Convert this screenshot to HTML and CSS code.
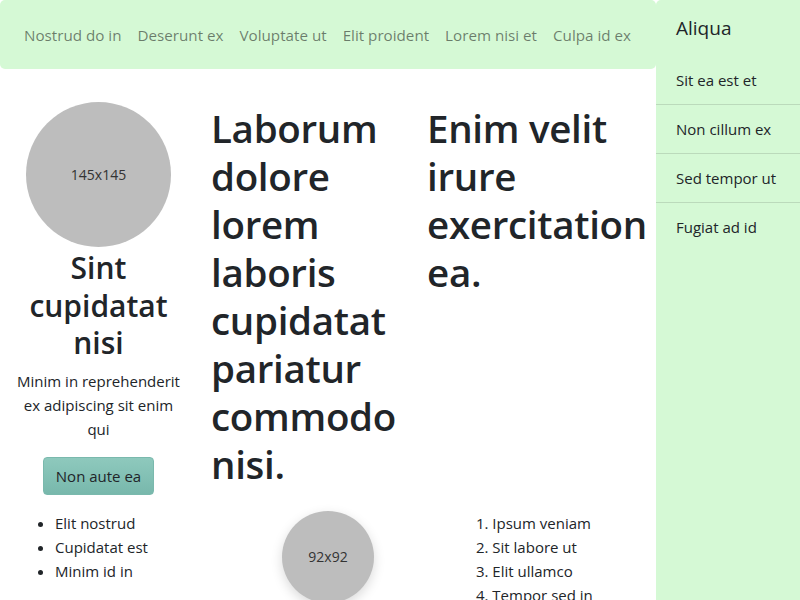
FILE: index.html
```html
<!DOCTYPE html>
<html lang="en">
<head>
<meta charset="utf-8">
<title>Page</title>
<link rel="stylesheet" href="styles.css">
</head>
<body>
<div class="layout">
  <div class="main">
    <nav class="navbar">
      <a class="nav-link" href="#">Nostrud do in</a>
      <a class="nav-link" href="#">Deserunt ex</a>
      <a class="nav-link" href="#">Voluptate ut</a>
      <a class="nav-link" href="#">Elit proident</a>
      <a class="nav-link" href="#">Lorem nisi et</a>
      <a class="nav-link" href="#">Culpa id ex</a>
    </nav>
    <div class="row-top">
      <div class="col col-profile">
        <div class="avatar avatar-lg">145x145</div>
        <h2 class="profile-title">Sint cupidatat nisi</h2>
        <p class="profile-text">Minim in reprehenderit ex adipiscing sit enim qui</p>
        <button class="btn" type="button">Non aute ea</button>
      </div>
      <div class="col col-head">
        <h1 class="big-title">Laborum dolore lorem laboris cupidatat pariatur commodo nisi.</h1>
      </div>
      <div class="col col-head">
        <h1 class="big-title">Enim velit irure exercitation ea.</h1>
      </div>
    </div>
    <div class="row-bottom">
      <div class="cell">
        <ul class="list">
          <li>Elit nostrud</li>
          <li>Cupidatat est</li>
          <li>Minim id in</li>
        </ul>
      </div>
      <div class="cell cell-center">
        <div class="avatar avatar-sm">92x92</div>
      </div>
      <div class="cell">
        <ol class="list">
          <li>Ipsum veniam</li>
          <li>Sit labore ut</li>
          <li>Elit ullamco</li>
          <li>Tempor sed in</li>
        </ol>
      </div>
    </div>
  </div>
  <aside class="sidebar">
    <div class="sidebar-header">Aliqua</div>
    <ul class="sidebar-list">
      <li class="sidebar-item">Sit ea est et</li>
      <li class="sidebar-item">Non cillum ex</li>
      <li class="sidebar-item">Sed tempor ut</li>
      <li class="sidebar-item">Fugiat ad id</li>
    </ul>
  </aside>
</div>
</body>
</html>
```
FILE: styles.css
```css
* { box-sizing: border-box; }
html, body { margin: 0; padding: 0; }
body {
  font-family: "Open Sans", "Noto Sans", sans-serif;
  font-size: 15px;
  line-height: 24px;
  color: #212529;
  background: #fff;
  overflow: hidden;
}
.layout {
  display: flex;
  height: 600px;
}
.main {
  width: 656px;
  flex: none;
}
.navbar {
  height: 69px;
  display: flex;
  align-items: center;
  padding: 0 8px 0 16px;
  background: #d5f9d5;
  border-radius: 5px;
}
.nav-link {
  padding: 0 8px;
  font-size: 15.2px;
  color: rgba(0, 0, 0, 0.5);
  text-decoration: none;
  white-space: nowrap;
}
.row-top {
  display: grid;
  grid-template-columns: 181px 200px 1fr;
  column-gap: 22px;
  padding-left: 8px;
  margin-top: 33px;
}
.col-profile {
  display: flex;
  flex-direction: column;
  align-items: center;
  text-align: center;
}
.col-head { padding-top: 2px; }
.col-head + .col-head { margin-left: -6px; }
.avatar {
  border-radius: 50%;
  background: #bdbdbd;
  color: #333;
  display: flex;
  align-items: center;
  justify-content: center;
  font-size: 14px;
}
.avatar-lg { width: 145px; height: 145px; }
.avatar-sm {
  width: 92px;
  height: 92px;
  box-shadow: 0 4px 12px rgba(0, 0, 0, 0.15);
}
.profile-title {
  margin: 2px 0 7px;
  font-size: 30px;
  line-height: 37.5px;
  font-weight: 600;
}
.profile-text {
  margin: 0 0 16px;
  max-width: 168px;
}
.btn {
  font: inherit;
  color: #212529;
  height: 38px;
  padding: 6px 12px;
  border: 1px solid #7ab9ad;
  border-radius: 4px;
  background: linear-gradient(#8ec9bd, #78b8ac);
  cursor: pointer;
}
.big-title {
  margin: 0;
  font-size: 38.5px;
  line-height: 48px;
  font-weight: 600;
  letter-spacing: -0.3px;
}
.row-bottom {
  display: grid;
  grid-template-columns: repeat(3, 1fr);
  margin-top: 16px;
}
.cell { padding-left: 23px; }
.cell-center {
  padding-left: 0;
  display: flex;
  justify-content: center;
}
.list {
  margin: 0;
  padding-left: 32px;
}
.sidebar {
  width: 144px;
  flex: none;
  height: 600px;
  background: #d5f9d5;
  border-radius: 5px 0 0 0;
}
.sidebar-header {
  padding: 16px 20px;
  font-size: 19px;
  line-height: 24px;
}
.sidebar-list {
  list-style: none;
  margin: 0;
  padding: 0;
}
.sidebar-item {
  padding: 12px 20px;
  border-bottom: 1px solid rgba(0, 0, 0, 0.12);
  white-space: nowrap;
}
.sidebar-item:last-child { border-bottom: none; }
```
